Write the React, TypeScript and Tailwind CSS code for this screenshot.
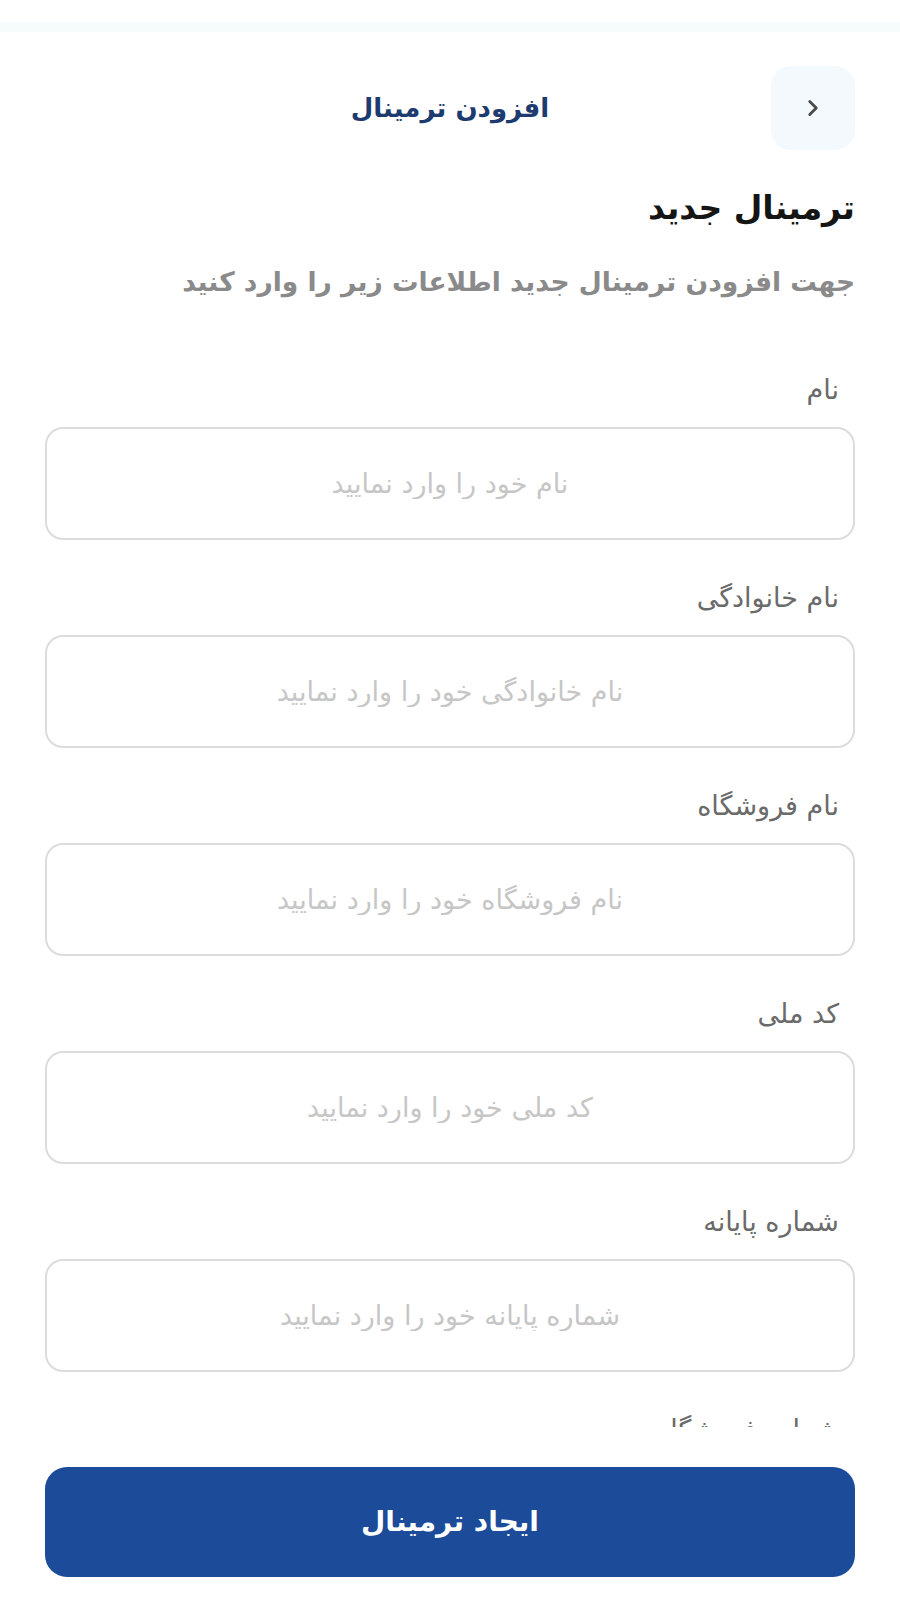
import { ChevronRight } from "lucide-react";

const fields = [
  { label: "نام", placeholder: "نام خود را وارد نمایید" },
  { label: "نام خانوادگی", placeholder: "نام خانوادگی خود را وارد نمایید" },
  { label: "نام فروشگاه", placeholder: "نام فروشگاه خود را وارد نمایید" },
  { label: "کد ملی", placeholder: "کد ملی خود را وارد نمایید" },
  { label: "شماره پایانه", placeholder: "شماره پایانه خود را وارد نمایید" },
  { label: "شماره فروشگاه", placeholder: "شماره فروشگاه خود را وارد نمایید" },
];

function Field({ label, placeholder }: { label: string; placeholder: string }) {
  return (
    <div className="flex flex-col">
      <label className="pr-[16px] text-[27px] leading-[30px] text-[#6a6a6a]">
        {label}
      </label>
      <input
        className="mt-[22px] h-[113px] w-full rounded-[18px] border-2 border-[#dcdcdc] bg-white px-4 text-center text-[27px] text-[#333] outline-none placeholder:text-[#c6c6c6]"
        placeholder={placeholder}
      />
    </div>
  );
}

export default function App() {
  return (
    <div
      dir="rtl"
      className="relative h-[1600px] w-[900px] overflow-hidden bg-white font-['DejaVu_Sans',sans-serif]"
    >
      <div className="h-[22px] bg-white" />
      <div className="h-[10px] bg-[#f6fbfb]" />

      <div className="px-[45px]">
        {/* header */}
        <div className="mt-[34px] grid h-[84px] grid-cols-[84px_1fr_84px] items-center">
          <button className="flex h-[84px] w-[84px] items-center justify-center rounded-[20px] bg-[#f4f9fd]">
            <ChevronRight size={26} strokeWidth={2.6} className="text-[#4a4a4a]" />
          </button>
          <h1 className="text-center text-[26px] leading-[36px] font-bold text-[#1d3b6e]">
            افزودن ترمینال
          </h1>
          <div />
        </div>

        <h2 className="mt-[38px] text-[33px] leading-[40px] font-bold text-[#151515]">
          ترمینال جدید
        </h2>
        <p className="mt-[36px] text-[26.5px] leading-[36px] font-semibold text-[#8a8a8a]">
          جهت افزودن ترمینال جدید اطلاعات زیر را وارد کنید
        </p>

        <div className="mt-[75px] flex flex-col gap-[43px]">
          {fields.map((f) => (
            <Field key={f.label} label={f.label} placeholder={f.placeholder} />
          ))}
        </div>
      </div>

      {/* footer */}
      <div className="absolute inset-x-0 top-[1427px] bottom-0 bg-white px-[45px] pt-[40px]">
        <button className="flex h-[110px] w-full items-center justify-center rounded-[22px] bg-[#1c4b9a] text-[28px] font-bold text-white">
          ایجاد ترمینال
        </button>
      </div>
    </div>
  );
}
